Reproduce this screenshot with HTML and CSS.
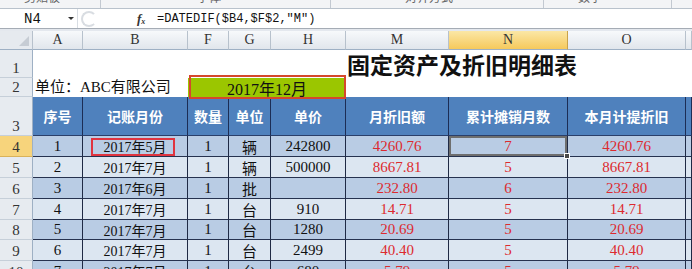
FILE: index.html
```html
<!DOCTYPE html>
<html lang="zh">
<head>
<meta charset="utf-8">
<link rel="stylesheet" href="styles.css">
</head>
<body>
<div class="ribbon">
  <span class="rlabel l1">剪贴板</span><span class="rsep s1"></span>
  <span class="rlabel l2">字体</span><span class="rsep s2"></span>
  <span class="rlabel l3">对齐方式</span><span class="rsep s3"></span>
  <span class="rlabel l4">数字</span><span class="rsep s4"></span>
</div>
<div class="fbar">
  <div class="namebox"><span class="nb-text">N4</span><span class="nb-arrow"></span></div>
  <div class="ring"></div>
  <div class="fx">f<sub>x</sub></div>
  <div class="formula">=DATEDIF($B4,$F$2,"M")</div>
</div>
<div class="sheet">
  <!-- column headers -->
  <div class="ch corner"><span class="tri"></span></div>
  <div class="ch">A</div><div class="ch">B</div><div class="ch">F</div><div class="ch">G</div><div class="ch">H</div><div class="ch">M</div><div class="ch sel">N</div><div class="ch">O</div><div class="ch"></div>

  <!-- row 1 -->
  <div class="rh r1">1</div>
  <div class="blank span5"></div>
  <div class="title">固定资产及折旧明细表</div>

  <!-- row 2 -->
  <div class="rh">2</div>
  <div class="unit">单位：ABC有限公司</div>
  <div class="period">2017年12月<span class="redbox2"></span></div>
  <div class="blank span4"></div>

  <!-- row 3 -->
  <div class="rh r3">3</div>
  <div class="hd">序号</div><div class="hd">记账月份</div><div class="hd">数量</div><div class="hd">单位</div><div class="hd">单价</div><div class="hd">月折旧额</div><div class="hd">累计摊销月数</div><div class="hd">本月计提折旧</div><div class="hd"></div>

  <!-- row 4 -->
  <div class="rh rsel">4</div>
  <div class="c d">1</div><div class="c d mon">2017年5月<span class="redbox"></span></div><div class="c d">1</div><div class="c d">辆</div><div class="c d">242800</div><div class="c d red">4260.76</div><div class="c d red active">7<span class="handle"></span></div><div class="c d red">4260.76</div><div class="c d"></div>

  <div class="rh">5</div>
  <div class="c l">2</div><div class="c l mon">2017年7月</div><div class="c l">1</div><div class="c l">辆</div><div class="c l">500000</div><div class="c l red">8667.81</div><div class="c l red">5</div><div class="c l red">8667.81</div><div class="c l"></div>

  <div class="rh">6</div>
  <div class="c d">3</div><div class="c d mon">2017年6月</div><div class="c d">1</div><div class="c d">批</div><div class="c d"></div><div class="c d red">232.80</div><div class="c d red">6</div><div class="c d red">232.80</div><div class="c d"></div>

  <div class="rh">7</div>
  <div class="c l">4</div><div class="c l mon">2017年7月</div><div class="c l">1</div><div class="c l">台</div><div class="c l">910</div><div class="c l red">14.71</div><div class="c l red">5</div><div class="c l red">14.71</div><div class="c l"></div>

  <div class="rh">8</div>
  <div class="c d">5</div><div class="c d mon">2017年7月</div><div class="c d">1</div><div class="c d">台</div><div class="c d">1280</div><div class="c d red">20.69</div><div class="c d red">5</div><div class="c d red">20.69</div><div class="c d"></div>

  <div class="rh">9</div>
  <div class="c l">6</div><div class="c l mon">2017年7月</div><div class="c l">1</div><div class="c l">台</div><div class="c l">2499</div><div class="c l red">40.40</div><div class="c l red">5</div><div class="c l red">40.40</div><div class="c l"></div>

  <div class="rh">10</div>
  <div class="c d">7</div><div class="c d mon">2017年7月</div><div class="c d">1</div><div class="c d">台</div><div class="c d">680</div><div class="c d red">5.79</div><div class="c d red">5</div><div class="c d red">5.79</div><div class="c d"></div>
</div>
</body>
</html>
```

FILE: styles.css
```css
html, body {
  margin: 0;
  padding: 0;
  width: 692px;
  height: 269px;
  overflow: hidden;
  background: #ffffff;
}

.ribbon {
  position: relative;
  height: 8px;
  background: #f3f4f6;
  border-bottom: 1px solid #b9c2cc;
  overflow: hidden;
}
.rlabel {
  position: absolute;
  top: -12px;
  font: 12px "Noto Sans CJK SC", sans-serif;
  color: #666;
}
.l1 { left: 24px; }
.l2 { left: 197px; }
.l3 { left: 405px; }
.l4 { left: 578px; }
.rsep {
  position: absolute;
  top: 0;
  width: 1px;
  height: 8px;
  background: #c3c9d1;
}
.s1 { left: 100px; }
.s2 { left: 330px; }
.s3 { left: 543px; }
.s4 { left: 671px; }

.fbar {
  display: flex;
  align-items: center;
  height: 19px;
  background: #ffffff;
  border-bottom: 1px solid #a5acb5;
  box-shadow: 0 2px 0 #e4e8ee;
  margin-bottom: 2px;
}
.namebox {
  width: 78px;
  height: 19px;
  display: flex;
  align-items: center;
  box-sizing: border-box;
  border-right: 1px solid #d8dde3;
}
.nb-text {
  font: 14px "Liberation Mono", monospace;
  color: #111;
  margin-left: 24px;
  width: 40px;
}
.nb-arrow {
  width: 0;
  height: 0;
  border-left: 3px solid transparent;
  border-right: 3px solid transparent;
  border-top: 3px solid #333;
  margin-left: 4px;
}
.ring {
  width: 12px;
  height: 12px;
  border-radius: 50%;
  border: 2px solid #d9dde2;
  border-right-color: transparent;
  margin-left: 3px;
}
.fx {
  margin-left: 40px;
  font: italic bold 13px "Liberation Serif", serif;
  color: #333;
  width: 20px;
}
.fx sub {
  font-size: 8px;
  vertical-align: -1px;
}
.formula {
  font: 12px "Liberation Mono", monospace;
  color: #111;
}

.sheet {
  display: grid;
  grid-template-columns: 33px 50px 105px 41px 42px 75px 103px 119px 118px 6px;
  grid-template-rows: 19px 28px 19px 39px 21px 21px 21px 21px 20px 21px 21px;
  font-family: "Liberation Serif", "Noto Sans CJK SC", serif;
}

.ch {
  box-sizing: border-box;
  background: linear-gradient(#f7f9fb, #e1e6ec);
  border-right: 1px solid #b7c1cc;
  border-bottom: 1px solid #9eb0c4;
  font: 14px "Liberation Serif", serif;
  color: #333;
  display: flex;
  align-items: center;
  justify-content: center;
}
.ch.sel {
  background: linear-gradient(#fbe7a6, #f6c95c);
  border-right-color: #c9a24a;
}
.corner {
  position: relative;
  background: #e6eaef;
}
.tri {
  position: absolute;
  right: 3px;
  bottom: 3px;
  width: 0;
  height: 0;
  border-left: 10px solid transparent;
  border-bottom: 10px solid #c6ccd4;
}

.rh {
  box-sizing: border-box;
  background: #e7ebf0;
  border-right: 1px solid #9eb0c4;
  border-bottom: 1px solid #c6cfd9;
  font: 15px "Liberation Serif", serif;
  color: #333;
  display: flex;
  align-items: flex-end;
  justify-content: center;
}
.rh.rsel {
  background: #f7d47c;
  border-bottom-color: #d9b25a;
}

.blank { background: #fff; }
.span5 { grid-column: span 5; }
.span4 { grid-column: span 4; }

.title {
  grid-column: span 4;
  font: bold 23px "Noto Sans CJK SC", sans-serif;
  color: #111;
  line-height: 28px;
  white-space: nowrap;
  padding-left: 1px;
}

.unit {
  grid-column: span 2;
  font: 15px "Liberation Serif", "Noto Sans CJK SC", serif;
  color: #111;
  display: flex;
  align-items: flex-end;
  padding-left: 2px;
  line-height: 19px;
  white-space: nowrap;
}
.period {
  grid-column: span 3;
  position: relative;
  background: #9bc600;
  font: 16px "Liberation Serif", "Noto Sans CJK SC", serif;
  color: #111;
  display: flex;
  align-items: center;
  justify-content: center;
}
.redbox2 {
  position: absolute;
  left: 1px;
  right: 0;
  top: -3px;
  bottom: -2px;
  border: 2px solid #d5482c;
}

.hd {
  box-sizing: border-box;
  background: #4f81bd;
  border-right: 1px solid #1c2d55;
  border-bottom: 1px solid #2a3f6a;
  color: #fff;
  font: bold 14px "Noto Sans CJK SC", sans-serif;
  display: flex;
  align-items: center;
  justify-content: center;
}

.c {
  box-sizing: border-box;
  border-right: 1px solid #1f2a45;
  border-bottom: 1px solid #26324f;
  font-size: 15px;
  color: #111;
  display: flex;
  align-items: center;
  justify-content: center;
  position: relative;
  white-space: nowrap;
}
.c.d { background: #b9cce4; }
.c.l { background: #dce6f1; }
.c.mon { font-size: 14px; }
.c.red { color: #dd2a2f; }

.c.active {
  box-shadow: inset 0 0 0 2px #6e6e6e;
}
.handle {
  position: absolute;
  right: -3px;
  bottom: -3px;
  width: 4px;
  height: 4px;
  background: #4a4a4a;
  border: 1px solid #fff;
  z-index: 2;
}
.redbox {
  position: absolute;
  left: 8px;
  top: 2px;
  width: 84px;
  height: 18px;
  box-sizing: border-box;
  border: 2px solid #e0343f;
}
```
